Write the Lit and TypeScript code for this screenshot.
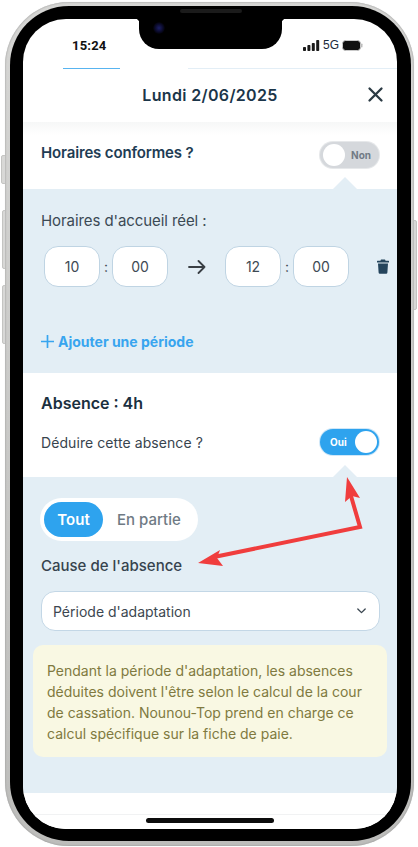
import { LitElement, html, css, svg } from "lit";
import { customElement } from "lit/decorators.js";

@customElement("app-root")
export class AppRoot extends LitElement {
  static styles = css`
    :host { display: block; width: 418px; height: 847px; background: #fff; font-family: Inter, "Liberation Sans", sans-serif; overflow: hidden; position: relative; }
    * { box-sizing: border-box; }
    .device { position: absolute; left: 5px; top: 2px; width: 409px; height: 844px; border-radius: 64px; padding: 4px 3px 5px 5px;
      background: linear-gradient(180deg, #d6d6d4, #c9c9c7 50%, #bdbdbb); box-shadow: inset 0 0 2px #8b8b8b, 0 0 1px #ddd; }
    .side { position: absolute; background: #d8d8d6; border: 1px solid #c4c4c2; }
    .s1 { left: 1px; top: 155px; width: 5px; height: 29px; border-radius: 2px 0 0 2px; }
    .s2 { left: 2px; top: 210px; width: 4px; height: 59px; border-radius: 2px 0 0 2px; }
    .s3 { left: 2px; top: 285px; width: 4px; height: 59px; border-radius: 2px 0 0 2px; }
    .s4 { left: 413px; top: 220px; width: 4px; height: 90px; border-radius: 0 2px 2px 0; }
    .bezel { width: 100%; height: 100%; background: #000; border-radius: 59px; padding: 13px 14px 12px 13px; position: relative; }
    .screen { width: 100%; height: 100%; background: #fff; border-radius: 43px; overflow: hidden; display: flex; flex-direction: column; position: relative; color: #1d3a50; }
    .notch { position: absolute; left: 116px; top: 0; width: 143px; height: 30px; background: #000; border-radius: 0 0 20px 20px; z-index: 2; }
    .notch::before { content: ""; position: absolute; left: -4px; top: 0; width: 4px; height: 4px; background: radial-gradient(circle at 0 100%, transparent 4px, #000 4.5px); }
    .notch::after { content: ""; position: absolute; right: -4px; top: 0; width: 4px; height: 4px; background: radial-gradient(circle at 100% 100%, transparent 4px, #000 4.5px); }
    .cam { position: absolute; left: 14px; top: 3px; width: 12px; height: 12px; border-radius: 50%; background: radial-gradient(circle, #1c1f66 0, #0b0b2c 45%, #000 75%); }
    .speaker { position: absolute; left: 170px; top: 3px; width: 62px; height: 4px; background: #1b1b1b; border-radius: 3px; z-index: 3; }
    .status { height: 50px; flex: none; padding: 17px 0 0 0; display: flex; align-items: flex-start; justify-content: space-between; position: relative; }
    .time { margin-left: 49px; font: 700 13px/19px Roboto, "Liberation Sans", sans-serif; color: #111; letter-spacing: .2px; }
    .sys { display: flex; align-items: center; gap: 3px; margin-right: 34px; height: 19px; font: 500 12px/19px "Liberation Sans", sans-serif; color: #1a2a3a; }
    .tabline { position: absolute; left: 40px; bottom: 0; width: 57px; height: 1px; background: #58b4f0; }
    .tabrest { position: absolute; left: 165px; right: 0; bottom: 0; height: 1px; background: #e3eef6; }
    .header { height: 53px; flex: none; display: flex; align-items: center; justify-content: center; position: relative; padding-bottom: 2px; font-size: 16px; font-weight: 600; letter-spacing: .35px; color: #1b3549; }
    .close { position: absolute; right: 13px; top: 17px; width: 17px; height: 17px; }
    .row { display: flex; align-items: center; justify-content: space-between; padding-right: 18px; padding-left: 18px; }
    .conform { height: 67px; flex: none; align-items: flex-start; padding-top: 20px; background: linear-gradient(180deg, #f6f7f7 0, #fff 13px); }
    .h1 { font-size: 15px; font-weight: 600; line-height: 22px; letter-spacing: -.15px; color: #1e3c54; }
    .toggle { width: 59px; height: 26px; border-radius: 13px; display: flex; align-items: center; font-size: 10px; font-weight: 700; }
    .off { background: #d5d8dc; color: #717b85; justify-content: space-between; box-shadow: 0 0 0 1px #e6e8ea; margin-top: 0; padding: 2px 2px 2px 3px; }
    .on { background: #2ea3ee; color: #fff; justify-content: space-between; box-shadow: 0 0 0 1px #cfe7f8; padding: 2px 2px 2px 10px; }
    .thumb { width: 22px; height: 22px; border-radius: 50%; background: #fff; }
    .off span { margin-right: 6px; }
    .panel { background: #e3eef5; position: relative; flex: none; }
    .panel::before { content: ""; position: absolute; left: 310px; top: -12px; width: 0; height: 0; border-left: 12px solid transparent; border-right: 12px solid transparent; border-bottom: 12px solid #e3eef5; }
    .hours { height: 184px; padding: 21px 8px 0 18px; }
    .label { font-size: 15px; line-height: 22px; letter-spacing: -.08px; color: #3b4954; }
    .times { display: flex; align-items: center; margin: 14px 0 0 3px; height: 41px; }
    .box { flex: none; width: 56px; height: 41px; background: #fff; border: 1px solid #bfd4e3; border-radius: 14px; display: flex; align-items: center; justify-content: center; font-size: 14px; color: #3e4a54; }
    .colon { flex: none; width: 12px; text-align: center; font-size: 14px; color: #3e4a54; }
    .arrow { flex: none; width: 57px; display: flex; justify-content: center; }
    .trash { flex: none; margin-left: 28px; width: 12px; height: 15px; }
    .add { display: flex; align-items: center; gap: 4px; margin-top: 44px; height: 20px; font-size: 14px; font-weight: 700; color: #38a5ef; }
    .absence { height: 104px; flex: none; padding: 19px 18px 0 18px; }
    .h2 { font-size: 16px; font-weight: 600; line-height: 22px; color: #1b3040; }
    .ded { display: flex; align-items: center; justify-content: space-between; margin-top: 15px; }
    .ded span.t { font-size: 14px; font-weight: 400; color: #38444e; letter-spacing: .08px; }
    .cause { height: 316px; padding: 21px 17px 0 10px; display: flex; flex-direction: column; }
    .seg { margin-left: 7px; width: 158px; height: 43px; background: #fff; border-radius: 22px; padding: 4px; display: flex; align-items: center; font-size: 15px; }
    .seg .a { width: 59px; height: 35px; border-radius: 18px; background: #2ea3ee; color: #fff; font-weight: 600; display: flex; align-items: center; justify-content: center; }
    .seg .b { margin-left: 14px; color: #6f7a84; font-weight: 500; }
    .cl { margin: 14px 0 0 8px; font-size: 15px; font-weight: 500; line-height: 22px; color: #36434e; }
    .select { margin: 14px 0 0 8px; height: 40px; background: #fff; border: 1.5px solid #c3d7e6; border-radius: 14px; display: flex; align-items: center; justify-content: space-between; padding: 0 13px 0 11px; font-size: 14px; color: #3c4750; }
    .note { margin-top: 14px; height: 112px; width: 354px; background: #f9f8e3; border-radius: 10px; padding: 15px 14px; font-size: 14px; line-height: 21px; color: #807a40; }
    .foot { flex: 1; background: #fff; position: relative; }
    .foot::before { content: ""; position: absolute; left: 0; right: 0; top: 21px; height: 1px; background: #f1f2f3; }
    .home { position: absolute; left: 123px; bottom: 6px; width: 128px; height: 5px; border-radius: 3px; background: #0c0c0c; z-index: 2; }
    .annot { position: absolute; left: 0; top: 0; width: 418px; height: 847px; pointer-events: none; z-index: 5; }
  `;

  render() {
    return html`
      <div class="side s1"></div><div class="side s2"></div><div class="side s3"></div><div class="side s4"></div>
      <div class="device"><div class="bezel">
        <div class="speaker"></div>
        <div class="screen">
          <div class="notch"><div class="cam"></div></div>
          <div class="status">
            <span class="time">15:24</span>
            <span class="sys">
              <svg width="17" height="12" viewBox="0 0 17 12"><g fill="#1a1a1a"><rect x="0" y="7" width="3" height="4" rx=".8"/><rect x="4.4" y="5" width="3" height="6" rx=".8"/><rect x="8.8" y="3" width="3" height="8" rx=".8"/><rect x="13.2" y="0" width="3" height="11" rx=".8"/></g></svg>
              <span>5G</span>
              <svg width="21" height="11" viewBox="0 0 21 11"><rect x=".5" y=".5" width="18" height="10" rx="3" fill="#111" stroke="#c9c9c9"/><rect x="19" y="3.5" width="1.5" height="4" rx=".7" fill="#bbb"/></svg>
            </span>
            <div class="tabline"></div><div class="tabrest"></div>
          </div>
          <div class="header">Lundi 2/06/2025
            <svg class="close" viewBox="0 0 17 17"><path d="M2.5 2.5 14.5 14.5M14.5 2.5 2.5 14.5" stroke="#2b3a44" stroke-width="2.3" stroke-linecap="round" fill="none"/></svg>
          </div>
          <div class="row conform">
            <span class="h1">Horaires conformes ?</span>
            <div class="toggle off"><div class="thumb"></div><span>Non</span></div>
          </div>
          <div class="panel hours">
            <div class="label">Horaires d'accueil réel :</div>
            <div class="times">
              <div class="box">10</div><div class="colon">:</div><div class="box">00</div>
              <div class="arrow"><svg width="18" height="14" viewBox="0 0 18 14"><path d="M1 7H16.5M10.5 1 16.5 7 10.5 13" stroke="#3a3f44" stroke-width="1.8" fill="none" stroke-linecap="round" stroke-linejoin="round"/></svg></div>
              <div class="box">12</div><div class="colon">:</div><div class="box">00</div>
              <svg class="trash" viewBox="0 0 12 15"><path d="M4 0.5H8L8.6 1.7H11.5A.5.5 0 0 1 12 2.2V3.4H0V2.2A.5.5 0 0 1 .5 1.7H3.4Z M1 4.4H11L10.4 13.6A1.3 1.3 0 0 1 9.1 14.8H2.9A1.3 1.3 0 0 1 1.6 13.6Z" fill="#24445c"/></svg>
            </div>
            <div class="add">
              <svg width="13" height="13" viewBox="0 0 13 13"><path d="M6.5 .5V12.5M.5 6.5H12.5" stroke="#38a5ef" stroke-width="1.7" fill="none" stroke-linecap="round"/></svg>
              <span>Ajouter une période</span>
            </div>
          </div>
          <div class="absence">
            <div class="h2">Absence : 4h</div>
            <div class="ded"><span class="t">Déduire cette absence ?</span><div class="toggle on"><span>Oui</span><div class="thumb"></div></div></div>
          </div>
          <div class="panel cause">
            <div class="seg"><div class="a">Tout</div><div class="b">En partie</div></div>
            <div class="cl">Cause de l'absence</div>
            <div class="select"><span>Période d'adaptation</span>
              <svg width="9" height="6" viewBox="0 0 11 7"><path d="M1 1 5.5 5.5 10 1" stroke="#3a4650" stroke-width="1.6" fill="none" stroke-linecap="round" stroke-linejoin="round"/></svg>
            </div>
            <div class="note">Pendant la période d'adaptation, les absences déduites doivent l'être selon le calcul de la cour de cassation. Nounou-Top prend en charge ce calcul spécifique sur la fiche de paie.</div>
          </div>
          <div class="foot"></div>
          <div class="home"></div>
        </div>
      </div></div>
      <svg class="annot" viewBox="0 0 418 847">
        ${svg`<path d="M351 496 360 527 214 557" fill="none" stroke="#f03d3d" stroke-width="4" stroke-linejoin="miter"/>
        <path d="M347 477 360 498 352 496 345 502Z" fill="#f03d3d"/>
        <path d="M198 563 220 550 217 558 223 566Z" fill="#f03d3d"/>`}
      </svg>
    `;
  }
}
